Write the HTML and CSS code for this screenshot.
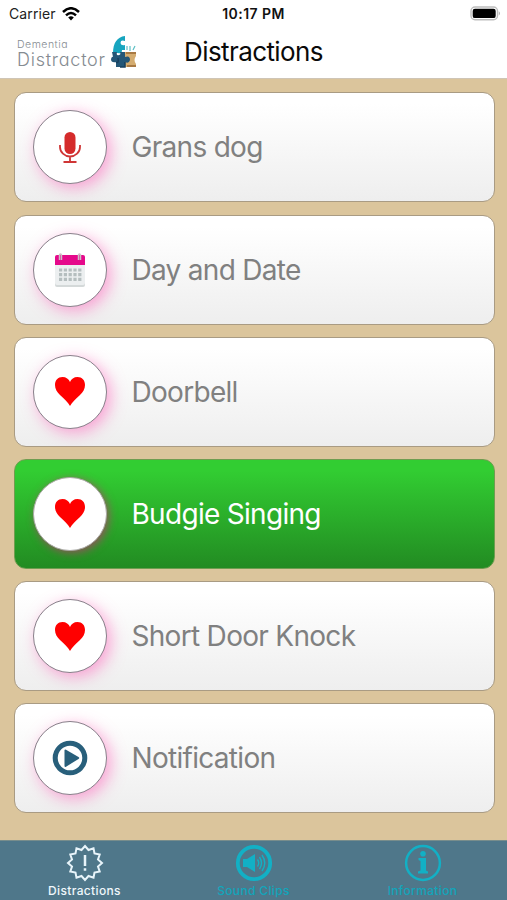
FILE: index.html
```html
<!DOCTYPE html>
<html lang="en">
  <head>
    <meta charset="UTF-8"/>
    <meta name="viewport" content="width=device-width, initial-scale=1.0">
    <link rel="stylesheet" href="styles.css">
    <title>Distractions</title>
  </head>
  <body>
    <svg width="0" height="0" class="symbols">
      <symbol id="heart" viewBox="0 0 30 29">
        <path fill="#ff0000" d="M15 29C13 25 9 22 5 18C2 15 0 12 0 8C0 3 3 0 7.500 0C11 0 14 2 15 5C16 2 19 0 22.500 0C27 0 30 3 30 8C30 12 28 15 25 18C21 22 17 25 15 29Z"/>
      </symbol>
    </svg>
    <header class="header">
      <div class="statusBar">
        <div class="statusBar_left">
          <span class="carrier">Carrier</span>
          <svg class="wifi" viewBox="0 0 18 14" width="18" height="14" fill="none" stroke="#000" stroke-width="2.500">
            <path d="M1 5Q9-2.500 17 5"/>
            <path d="M4 8.300Q9 3.700 14 8.300"/>
            <path d="M6.200 10.500Q9 8 11.800 10.500L9 13.500Z" fill="#000" stroke="none"/>
          </svg>
        </div>
        <span class="clock">10:17 PM</span>
        <svg class="battery" viewBox="0 0 31 15" width="31" height="15">
          <rect x="1" y="1" width="26.500" height="12.800" rx="4" fill="#fff" stroke="#bdbdbd" stroke-width="1.400"/>
          <rect x="2.700" y="2.800" width="23" height="9.300" rx="2.200" fill="#000"/>
          <path d="M28.800 5.200Q31 7.400 28.800 9.600Z" fill="#aaa"/>
        </svg>
      </div>
      <div class="titleBar">
        <div class="logo">
          <div class="logo_text">
            <span class="logo_first">Dementia</span>
            <span class="logo_last">Distractor</span>
          </div>
          <svg class="logo_icon" viewBox="0 0 26 32" width="26" height="32">
            <path d="M2 17C2 7 6 1 14 0V5Q9.500 3.500 9.500 7Q10 10 14 9V14H11Q11 18 7 17H2Z" fill="#17a5bf"/>
            <path d="M14 16H25V20Q22 24 25 28V31H14Z" fill="#d4ac70"/>
            <path d="M15 16H25V18H15ZM16 29H25V31H16Z" fill="#a87943"/>
            <path d="M16 14V10M19 15V10M22 14L24 10" stroke="#5cbfc4" stroke-width="1.200"/>
            <path d="M1 16H6Q5 20 8 19Q10 19 9 16H14V21Q19 19 19 24Q18 28 14 26V31H5V26Q0 27 0 23Q1 20 2 21Z" fill="#235677"/>
            <path d="M5 26Q8 28 7 22M14 26V31H9" fill="none" stroke="#173f5e" stroke-width="1.500"/>
          </svg>
        </div>
        <h1 class="title">Distractions</h1>
      </div>
    </header>
    <main class="list">
      <div class="card">
        <div class="card_circle">
          <svg viewBox="0 0 22 31" width="22" height="31">
            <rect x="5.500" y="0" width="11" height="22" rx="5.500" fill="#d52b2b"/>
            <path d="M1 13V15A10 9.500 0 0 0 21 15V13M11 24.500V30M4.500 30H17.500" fill="none" stroke="#cf3535" stroke-width="1.800"/>
          </svg>
        </div>
        <span class="card_text">Grans dog</span>
      </div>
      <div class="card">
        <div class="card_circle">
          <svg viewBox="0 0 30 34" width="30" height="34">
            <rect x="0" y="3" width="30" height="31" rx="2" fill="#d4d9d9"/>
            <path d="M0 12H30V30Q30 32 28 32H2Q0 32 0 30Z" fill="#eceff0"/>
            <path d="M0 12V4Q0 2 2 2H28Q30 2 30 4V12Z" fill="#e5098b"/>
            <path d="M4.500 7V2Q5.500 0 6.500 2V7M23.500 7V2Q24.500 0 25.500 2V7" fill="none" stroke="#cbbfc6" stroke-width="1.500"/>
            <path d="M4 17H27M4 21.700H27M4 26.400H27" stroke="#b5bebf" stroke-width="3.200" stroke-dasharray="3.200 1.600"/>
          </svg>
        </div>
        <span class="card_text">Day and Date</span>
      </div>
      <div class="card">
        <div class="card_circle">
          <svg width="30" height="29"><use href="#heart"/></svg>
        </div>
        <span class="card_text">Doorbell</span>
      </div>
      <div class="card card_active">
        <div class="card_circle">
          <svg width="30" height="29"><use href="#heart"/></svg>
        </div>
        <span class="card_text">Budgie Singing</span>
      </div>
      <div class="card">
        <div class="card_circle">
          <svg width="30" height="29"><use href="#heart"/></svg>
        </div>
        <span class="card_text">Short Door Knock</span>
      </div>
      <div class="card">
        <div class="card_circle">
          <svg viewBox="0 0 36 36" width="36" height="36">
            <circle cx="18" cy="18" r="14.800" fill="none" stroke="#285f7b" stroke-width="5"/>
            <path d="M12.500 10.500Q12.500 9 14 9.700L26.500 17Q28 18 26.500 19L14 26.700Q12.500 27.500 12.500 25.700Z" fill="#285f7b"/>
          </svg>
        </div>
        <span class="card_text">Notification</span>
      </div>
    </main>
    <footer class="tabs">
      <div class="tab tab_active">
        <svg viewBox="-19 -19 38 38" width="38" height="38" fill="none" stroke="#e8f4fa" stroke-width="2">
          <path d="M0-17L3.500-13 8.500-14.700 9.500-9.500 14.700-8.500 13-3.500 17 0 13 3.500 14.700 8.500 9.500 9.500 8.500 14.700 3.500 13 0 17-3.500 13-8.500 14.700-9.500 9.500-14.700 8.500-13 3.500-17 0-13-3.500-14.700-8.500-9.500-9.500-8.500-14.700-3.500-13Z"/>
          <path d="M0-8V3M0 5.300V7.800" stroke-width="2.500"/>
        </svg>
        <span class="tab_text">Distractions</span>
      </div>
      <div class="tab">
        <svg viewBox="-19 -19 38 38" width="38" height="38" fill="none" stroke="#12b0c5">
          <circle r="16.200" stroke-width="3.800"/>
          <path d="M-11-4H-7L1-9V9L-7 4H-11Z" fill="#12b0c5" stroke="none"/>
          <path d="M3.500-3.500Q6 0 3.500 3.500M5.500-6Q9.500 0 5.500 6M8-8Q13.500 0 8 8" stroke-width="1.400"/>
        </svg>
        <span class="tab_text">Sound Clips</span>
      </div>
      <div class="tab">
        <svg viewBox="-19 -19 38 38" width="38" height="38" fill="none" stroke="#12b0c5">
          <circle r="16.900" stroke-width="2.500"/>
          <circle cx="0" cy="-9.300" r="2.800" fill="#12b0c5" stroke="none"/>
          <path d="M-4.500-5H3V7.500L5 8.500V10.500H-5V8.500L-2.500 7.500V-2L-4.500-3Z" fill="#12b0c5" stroke="none"/>
        </svg>
        <span class="tab_text">Information</span>
      </div>
    </footer>
  </body>
</html>
```
FILE: styles.css
```css
* {
  box-sizing: border-box;
}

body {
  margin: 0;
  height: 900px;
  display: flex;
  flex-direction: column;
  overflow: hidden;
  background-color: #dbc59c;
  font-family: Inter, "Liberation Sans", sans-serif;
}

svg {
  display: block;
  flex: none;
}

.symbols {
  position: absolute;
}

.header {
  height: 79px;
  flex: none;
  background-color: #fff;
  border-bottom: 1px solid #cfc5b6;
}

.statusBar {
  height: 27px;
  display: grid;
  grid-template-columns: 1fr auto 1fr;
  align-items: center;
  padding: 0 6px 0 9px;
}
  .statusBar_left {
    display: flex;
    align-items: center;
    gap: 6px;
  }
  .carrier {
    font-size: 14px;
    letter-spacing: 0.1px;
    color: #222;
  }
  .clock {
    font-size: 14px;
    font-weight: 600;
    letter-spacing: 0.45px;
    color: #111;
    margin-right: 3px;
  }
  .battery {
    justify-self: end;
  }

.titleBar {
  height: 50px;
  display: grid;
  grid-template-columns: 1fr auto 1fr;
  align-items: center;
  padding: 0 17px;
}
  .logo {
    display: flex;
    align-items: center;
    gap: 5px;
  }
  .logo_text {
    display: flex;
    flex-direction: column;
    padding-top: 1px;
    color: #858b91;
    font-weight: 300;
    font-feature-settings: "cv11";
    white-space: nowrap;
  }
  .logo_first {
    font-size: 10.5px;
    line-height: 13px;
    letter-spacing: 0.5px;
  }
  .logo_last {
    font-size: 18px;
    line-height: 17px;
    letter-spacing: 0.75px;
  }
  .title {
    margin: 0;
    font-size: 26px;
    line-height: 32px;
    font-weight: 400;
    letter-spacing: -0.6px;
    color: #0a0a0a;
  }

.list {
  flex: 1;
  display: flex;
  flex-direction: column;
  gap: 12.2px;
  padding: 13.4px 12px 0 14px;
}

.card {
  height: 110px;
  flex: none;
  display: flex;
  align-items: center;
  gap: 25px;
  padding-left: 17.5px;
  border: 1px solid #a99b83;
  border-radius: 12px;
  background: linear-gradient(#fff 10%, #eee);
}
  .card_circle {
    width: 74px;
    height: 74px;
    flex: none;
    display: flex;
    justify-content: center;
    align-items: center;
    border: 1px solid #88808a;
    border-radius: 50%;
    background-color: #fff;
    box-shadow: 4px 4px 15px rgba(255, 80, 180, 0.5);
  }
  .card_text {
    font-size: 28px;
    letter-spacing: -0.7px;
    color: #808080;
    white-space: nowrap;
  }
  .card_active {
    border-color: #6f9d50;
    background: linear-gradient(#32cd32 10%, #228b22);
  }
  .card_active .card_circle {
    border-color: #a9aaa5;
    box-shadow: 2px 2px 9px rgba(175, 65, 105, 0.8);
  }
  .card_active .card_text {
    color: #fff;
  }

.tabs {
  height: 60px;
  flex: none;
  display: grid;
  grid-template-columns: repeat(3, 1fr);
  background-color: #4f778a;
  border-top: 1px solid #788d8c;
}
  .tab {
    display: flex;
    flex-direction: column;
    align-items: center;
    padding-top: 3px;
    color: #12a5ba;
  }
  .tab_active {
    color: #f0f8fc;
  }
  .tab_text {
    font-size: 12px;
    line-height: 17px;
    font-weight: 500;
    letter-spacing: 0.35px;
  }
```
